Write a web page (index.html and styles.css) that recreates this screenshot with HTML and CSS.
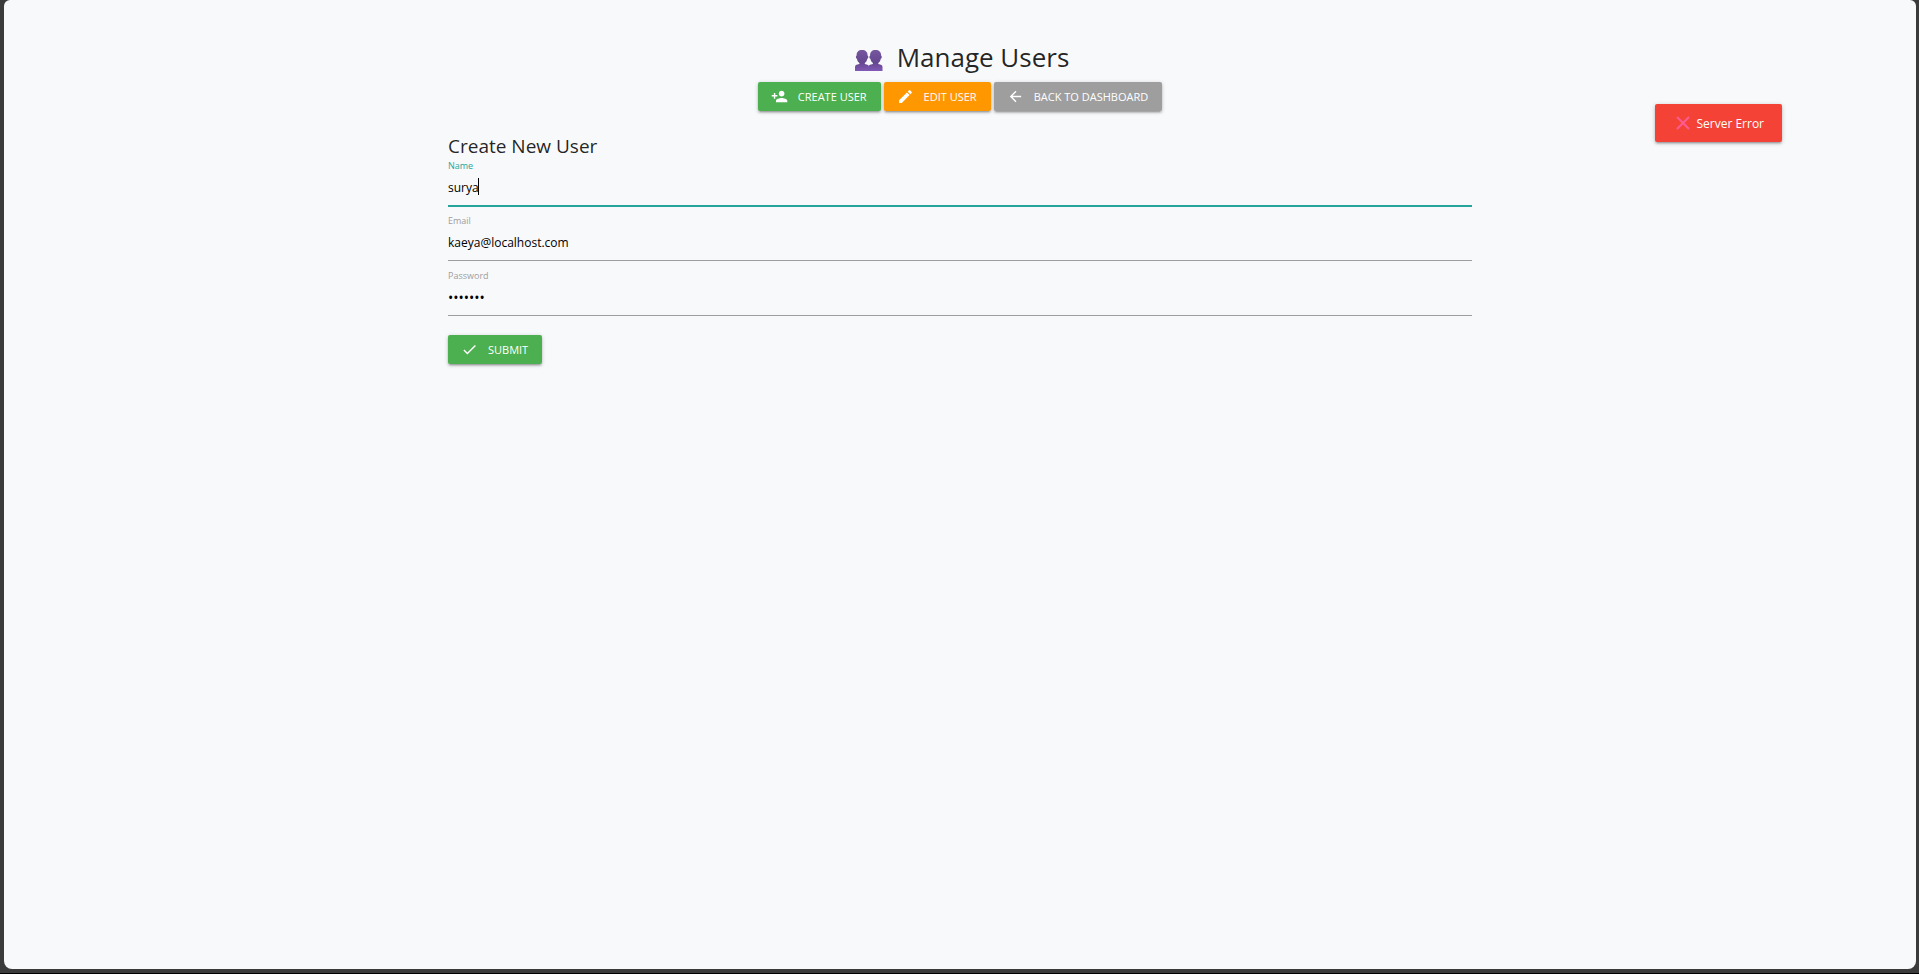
FILE: index.html
```html
<!DOCTYPE html>
<html lang="en">
<head>
<meta charset="utf-8">
<title>Manage Users</title>
<link rel="stylesheet" href="styles.css">
</head>
<body>
<div class="page">
  <main class="container">
    <h1 class="title">
      <svg class="title-icon" viewBox="0 0 28 22" aria-hidden="true">
        <defs><linearGradient id="bust" x1="0" y1="0" x2="0" y2="1"><stop offset="0" stop-color="#76579f"/><stop offset=".6" stop-color="#65478f"/><stop offset="1" stop-color="#8059b5"/></linearGradient></defs>
        <g fill="url(#bust)">
          <path d="M7 1C3.400 1 1.600 3 1.600 6.400C.5 6.800.7 9.400 1.900 9.800C2.300 12 3.300 13.200 4.400 14V15L1.500 15.800Q0 16.300 0 18V22H14V18Q14 16.300 12.500 15.800L9.800 15V14C10.900 13.200 11.900 12 12.300 9.800C13.500 9.400 13.700 6.800 12.600 6.400C12.600 3 10.600 1 7 1Z"/>
          <path d="M20.500 1C16.900 1 15.100 3 15.100 6.400C14 6.800 14.200 9.400 15.400 9.800C15.800 12 16.800 13.200 17.900 14V15L15 15.800Q13.500 16.300 13.500 18V22H27.500V18Q27.500 16.300 26 15.800L23.300 15V14C24.400 13.200 25.400 12 25.800 9.800C27 9.400 27.200 6.800 26.100 6.400C26.100 3 24.100 1 20.500 1Z"/>
        </g>
      </svg>
      Manage Users
    </h1>
    <div class="actions">
      <button class="btn green" type="button"><svg class="icon" viewBox="0 0 24 24" aria-hidden="true"><path d="M15 12c2.210 0 4-1.790 4-4s-1.790-4-4-4-4 1.790-4 4 1.790 4 4 4zm-9-2V7H4v3H1v2h3v3h2v-3h3v-2H6zm9 4c-2.670 0-8 1.340-8 4v2h16v-2c0-2.660-5.330-4-8-4z"/></svg>CREATE USER</button>
      <button class="btn orange" type="button"><svg class="icon" viewBox="0 0 24 24" aria-hidden="true"><path d="M3 17.250V21h3.750L17.810 9.940l-3.750-3.750L3 17.250zM20.710 7.040c.39-.39.39-1.020 0-1.410l-2.340-2.340c-.39-.39-1.020-.39-1.410 0l-1.830 1.830 3.750 3.750 1.830-1.830z"/></svg>EDIT USER</button>
      <button class="btn grey" type="button"><svg class="icon" viewBox="0 0 24 24" aria-hidden="true"><path d="M20 11H7.830l5.590-5.590L12 4l-8 8 8 8 1.410-1.410L7.830 13H20v-2z"/></svg>BACK TO DASHBOARD</button>
    </div>
    <form class="form">
      <h2 class="subtitle">Create New User</h2>
      <div class="field active">
        <label for="name">Name</label>
        <input id="name" type="text" value="surya">
        <span class="caret"></span>
      </div>
      <div class="field">
        <label for="email">Email</label>
        <input id="email" type="email" value="kaeya@localhost.com">
      </div>
      <div class="field">
        <label for="password">Password</label>
        <input id="password" type="password" value="1234567">
      </div>
      <button class="btn green" type="button"><svg class="icon" viewBox="0 0 24 24" aria-hidden="true"><path d="M9 16.170L4.830 12l-1.420 1.410L9 19 21 7l-1.410-1.410z"/></svg>SUBMIT</button>
    </form>
  </main>
</div>
<div class="toast" role="alert">
  <svg class="cross" viewBox="0 0 14 14" aria-hidden="true"><path d="M1 1L13 13M13 1L1 13"/></svg>
  Server Error
</div>
</body>
</html>
```
FILE: styles.css
```css
* {
  box-sizing: border-box;
}

body {
  margin: 0;
  min-height: 100vh;
  display: flex;
  padding: 0 3px 4px 4px;
  background: #3b3b3b;
  border-bottom: 1px solid #000;
  font-family: "Open Sans", "Noto Sans", sans-serif;
  color: rgba(0, 0, 0, 0.87);
}

.page {
  flex: 1;
  padding-top: 40px;
  background: #f8f9fb;
  border-radius: 6px 6px 8px 8px;
}

.container {
  width: 70%;
  max-width: 1024px;
  margin: 0 auto;
}

.title {
  display: flex;
  justify-content: center;
  align-items: center;
  gap: 14px;
  margin: 0;
  padding-left: 4px;
  font-size: 26px;
  line-height: 34px;
  font-weight: 400;
}

.title-icon {
  width: 28px;
  height: 22px;
  margin-top: 6px;
}

.actions {
  display: flex;
  justify-content: center;
  gap: 3px;
  margin-top: 8px;
}

.btn {
  display: inline-flex;
  align-items: center;
  gap: 10px;
  height: 29px;
  padding: 0 14px 1px 13px;
  border: 0;
  border-radius: 2px;
  color: #fff;
  font-family: inherit;
  font-size: 11px;
  white-space: nowrap;
  box-shadow: 0 2px 2px 0 rgba(0, 0, 0, 0.14), 0 3px 1px -2px rgba(0, 0, 0, 0.12), 0 1px 4px 0 rgba(0, 0, 0, 0.2);
}

.green {
  background: #4caf50;
}

.orange {
  background: #ff9800;
}

.grey {
  background: #9e9e9e;
}

.icon {
  width: 17px;
  height: 17px;
  fill: #fff;
}

.form {
  margin-top: 21px;
}

.subtitle {
  margin: 0;
  font-size: 19px;
  line-height: 28px;
  font-weight: 400;
}

.field {
  position: relative;
  height: 46px;
  margin-bottom: 9px;
}

.field label {
  display: block;
  font-size: 9px;
  line-height: 12px;
  color: #9e9e9e;
}

.field input {
  display: block;
  width: 100%;
  height: 34px;
  padding: 0 0 3px;
  border: 0;
  border-bottom: 1px solid #9e9e9e;
  outline: 0;
  background: transparent;
  font-family: inherit;
  font-size: 12px;
  color: #000;
}

.field input[type="password"] {
  font-size: 14px;
}

.field.active label {
  color: #26a69a;
}

.field.active input {
  border-bottom-color: #26a69a;
  box-shadow: 0 1px 0 0 #26a69a;
}

.caret {
  position: absolute;
  left: 30px;
  top: 18px;
  width: 1px;
  height: 17px;
  background: #000;
}

.form .btn {
  margin-top: 10px;
}

.toast {
  position: absolute;
  top: 104px;
  right: 137px;
  display: flex;
  align-items: center;
  gap: 6px;
  height: 38px;
  padding: 0 18px 0 21px;
  border-radius: 2px;
  background: #f44336;
  color: #fff;
  font-size: 12px;
  box-shadow: 0 2px 2px 0 rgba(0, 0, 0, 0.14), 0 3px 1px -2px rgba(0, 0, 0, 0.12), 0 1px 5px 0 rgba(0, 0, 0, 0.2);
}

.cross {
  width: 14px;
  height: 14px;
  fill: none;
  stroke: #ff5a92;
  stroke-width: 2;
}
```
